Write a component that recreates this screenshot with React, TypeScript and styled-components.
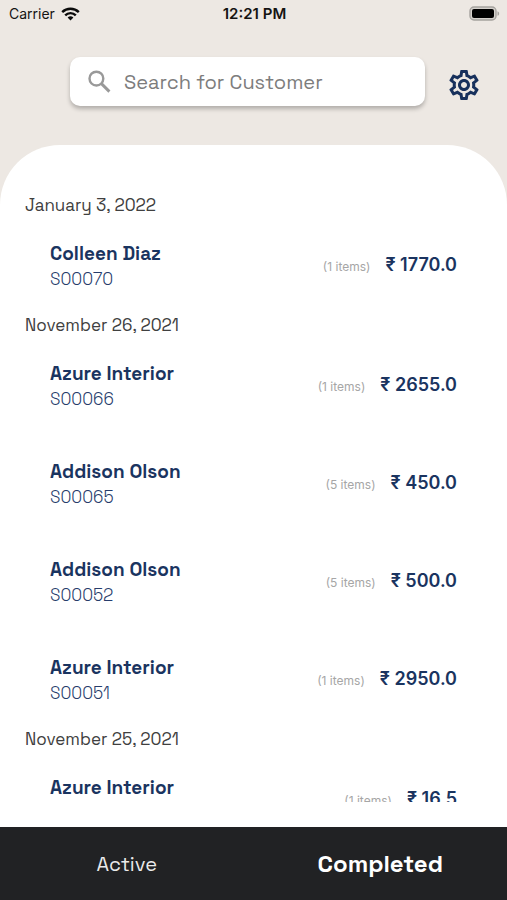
import React from "react";
import styled, { createGlobalStyle } from "styled-components";

const GlobalStyle = createGlobalStyle`
  *, *::before, *::after { box-sizing: border-box; }
  body {
    margin: 0;
    background: #ede8e3;
    font-family: "Space Grotesk", Inter, Roboto, sans-serif;
  }
  h1, h2, h3, p, ul { margin: 0; padding: 0; }
  ul { list-style: none; }
`;

const Screen = styled.div`
  display: flex;
  flex-direction: column;
  height: 100vh;
  overflow: hidden;
`;

const StatusBar = styled.div`
  display: grid;
  grid-template-columns: 1fr auto 1fr;
  align-items: center;
  height: 27px;
  padding: 0 7px 0 9px;
  font-family: Inter, sans-serif;
  font-size: 14px;
  color: #151413;
`;

const Carrier = styled.div`
  display: flex;
  align-items: center;
  gap: 6px;
`;

const Clock = styled.time`
  font-size: 15px;
  font-weight: 600;
`;

const Battery = styled.div`
  display: flex;
  justify-content: flex-end;
`;

const Header = styled.header`
  display: flex;
  align-items: center;
  gap: 21px;
  padding: 30px 25px 39px 70px;
`;

const SearchBox = styled.label`
  flex: 1;
  min-width: 0;
  display: flex;
  align-items: center;
  gap: 12px;
  height: 49px;
  padding: 0 16px;
  border-radius: 10px;
  background: #fff;
  box-shadow: 0 3px 4px rgba(0, 0, 0, 0.25);
`;

const SearchInput = styled.input`
  flex: 1;
  min-width: 0;
  padding: 0;
  border: 0;
  outline: 0;
  background: transparent;
  font: inherit;
  font-size: 20px;
  line-height: 26px;
  color: #333;
  &::placeholder {
    color: #7d7d7d;
    opacity: 1;
  }
`;

const IconButton = styled.button`
  display: flex;
  padding: 0;
  margin-top: 6px;
  border: 0;
  background: none;
  color: #17305c;
  cursor: pointer;
`;

const Panel = styled.main`
  flex: 1;
  min-height: 0;
  display: flex;
  flex-direction: column;
  padding: 49px 0 25px;
  border-radius: 60px 60px 0 0;
  background: #fff;
`;

const Orders = styled.div`
  flex: 1;
  min-height: 0;
  overflow-y: auto;
  scrollbar-width: none;
`;

const DateHeading = styled.h2`
  padding: 0 25px;
  font-size: 17px;
  line-height: 22px;
  font-weight: 400;
  color: #404040;
`;

const OrderRow = styled.li`
  display: flex;
  align-items: center;
  justify-content: space-between;
  height: 98px;
  padding: 0 50px;
`;

const Customer = styled.div`
  padding-top: 2px;
`;

const CustomerName = styled.h3`
  font-size: 19px;
  line-height: 25px;
  font-weight: 700;
  color: #1a3460;
`;

const OrderCode = styled.p`
  font-size: 17px;
  line-height: 26px;
  font-weight: 300;
  color: #263c6b;
`;

const Totals = styled.div`
  display: flex;
  align-items: baseline;
  gap: 15px;
  font-family: Inter, sans-serif;
`;

const ItemCount = styled.span`
  font-size: 12px;
  color: #a6a6a6;
`;

const Amount = styled.span`
  font-size: 18px;
  line-height: 22px;
  font-weight: 600;
  color: #1a3460;
`;

const TabBar = styled.nav`
  display: grid;
  grid-template-columns: 1fr 1fr;
  height: 73px;
  background: #212224;
`;

const Tab = styled.button<{ $active?: boolean }>`
  padding: 0;
  border: 0;
  background: none;
  font: inherit;
  font-size: ${(p) => (p.$active ? 24 : 20)}px;
  font-weight: ${(p) => (p.$active ? 700 : 400)};
  color: ${(p) => (p.$active ? "#fff" : "#ebebeb")};
  cursor: pointer;
`;

type Order = { name: string; code: string; items: number; amount: string };

const groups: { date: string; orders: Order[] }[] = [
  {
    date: "January 3, 2022",
    orders: [{ name: "Colleen Diaz", code: "S00070", items: 1, amount: "1770.0" }],
  },
  {
    date: "November 26, 2021",
    orders: [
      { name: "Azure Interior", code: "S00066", items: 1, amount: "2655.0" },
      { name: "Addison Olson", code: "S00065", items: 5, amount: "450.0" },
      { name: "Addison Olson", code: "S00052", items: 5, amount: "500.0" },
      { name: "Azure Interior", code: "S00051", items: 1, amount: "2950.0" },
    ],
  },
  {
    date: "November 25, 2021",
    orders: [{ name: "Azure Interior", code: "", items: 1, amount: "16.5" }],
  },
];

const WifiIcon = () => (
  <svg width="19" height="14" viewBox="0 0 19 14" fill="none" stroke="#0b0b0b" strokeWidth="2.4" aria-hidden="true">
    <path d="M1.2 5.2a11.8 11.8 0 0 1 16.6 0" />
    <path d="M4.2 8.3a7.5 7.5 0 0 1 10.6 0" />
    <path d="M9.5 13.6 6.6 10.6a4.1 4.1 0 0 1 5.8 0Z" fill="#0b0b0b" stroke="none" />
  </svg>
);

const BatteryIcon = () => (
  <svg width="31" height="15" viewBox="0 0 31 15" aria-hidden="true">
    <rect x="1" y="1" width="26" height="13" rx="4" fill="#d5d1cc" stroke="#a5a29e" strokeWidth="1.4" />
    <rect x="3" y="3" width="22" height="9" rx="2" fill="#000" />
    <path d="M28.5 5.2c2.2.8 2.2 3.8 0 4.6Z" fill="#a5a29e" />
  </svg>
);

const SearchIcon = () => (
  <svg width="26" height="26" viewBox="0 0 26 26" fill="none" stroke="#999" strokeWidth="2.4" aria-hidden="true">
    <circle cx="10.4" cy="9.6" r="6.9" />
    <path d="m15.4 14.6 8 8" strokeWidth="2.9" />
  </svg>
);

const GearIcon = () => (
  <svg width="36" height="36" viewBox="0 0 24 24" fill="currentColor" aria-hidden="true">
    <path d="M19.43 12.98c.04-.32.07-.64.07-.98 0-.34-.03-.66-.07-.98l2.11-1.65c.19-.15.24-.42.12-.64l-2-3.46c-.09-.16-.26-.25-.44-.25-.06 0-.12.01-.17.03l-2.49 1c-.52-.4-1.08-.73-1.69-.98l-.38-2.65C14.46 2.18 14.25 2 14 2h-4c-.25 0-.46.18-.49.42l-.38 2.65c-.61.25-1.17.59-1.69.98l-2.49-1c-.06-.02-.12-.03-.18-.03-.17 0-.34.09-.43.25l-2 3.46c-.13.22-.07.49.12.64l2.11 1.65c-.04.32-.07.65-.07.98 0 .33.03.66.07.98l-2.11 1.65c-.19.15-.24.42-.12.64l2 3.46c.09.16.26.25.44.25.06 0 .12-.01.17-.03l2.49-1c.52.4 1.08.73 1.69.98l.38 2.65c.03.24.24.42.49.42h4c.25 0 .46-.18.49-.42l.38-2.65c.61-.25 1.17-.59 1.69-.98l2.49 1c.06.02.12.03.18.03.17 0 .34-.09.43-.25l2-3.46c.12-.22.07-.49-.12-.64l-2.11-1.65zm-1.98-1.71c.04.31.05.52.05.73 0 .21-.02.43-.05.73l-.14 1.13.89.7 1.08.84-.7 1.21-1.27-.51-1.04-.42-.9.68c-.43.32-.84.56-1.25.73l-1.06.43-.16 1.13-.2 1.35h-1.4l-.19-1.35-.16-1.13-1.06-.43c-.43-.18-.83-.41-1.23-.71l-.91-.7-1.06.43-1.27.51-.7-1.21 1.08-.84.89-.7-.14-1.13c-.03-.31-.05-.54-.05-.74s.02-.43.05-.73l.14-1.13-.89-.7-1.08-.84.7-1.21 1.27.51 1.04.42.9-.68c.43-.32.84-.56 1.25-.73l1.06-.43.16-1.13.2-1.35h1.39l.19 1.35.16 1.13 1.06.43c.43.18.83.41 1.23.71l.91.7 1.06-.43 1.27-.51.7 1.21-1.07.85-.89.7.14 1.13zM12 8c-2.21 0-4 1.79-4 4s1.79 4 4 4 4-1.79 4-4-1.79-4-4-4zm0 6c-1.1 0-2-.9-2-2s.9-2 2-2 2 .9 2 2-.9 2-2 2z" />
  </svg>
);

export default function App() {
  return (
    <Screen>
      <GlobalStyle />
      <StatusBar>
        <Carrier>
          Carrier
          <WifiIcon />
        </Carrier>
        <Clock>12:21 PM</Clock>
        <Battery>
          <BatteryIcon />
        </Battery>
      </StatusBar>
      <Header>
        <SearchBox>
          <SearchIcon />
          <SearchInput type="text" placeholder="Search for Customer" aria-label="Search for Customer" />
        </SearchBox>
        <IconButton type="button" aria-label="Settings">
          <GearIcon />
        </IconButton>
      </Header>
      <Panel>
        <Orders>
          {groups.map((group) => (
            <section key={group.date}>
              <DateHeading>{group.date}</DateHeading>
              <ul>
                {group.orders.map((order, i) => (
                  <OrderRow key={i}>
                    <Customer>
                      <CustomerName>{order.name}</CustomerName>
                      <OrderCode>{order.code || "\u00a0"}</OrderCode>
                    </Customer>
                    <Totals>
                      <ItemCount>({order.items} items)</ItemCount>
                      <Amount>₹ {order.amount}</Amount>
                    </Totals>
                  </OrderRow>
                ))}
              </ul>
            </section>
          ))}
        </Orders>
      </Panel>
      <TabBar>
        <Tab type="button">Active</Tab>
        <Tab type="button" $active aria-current="page">
          Completed
        </Tab>
      </TabBar>
    </Screen>
  );
}
